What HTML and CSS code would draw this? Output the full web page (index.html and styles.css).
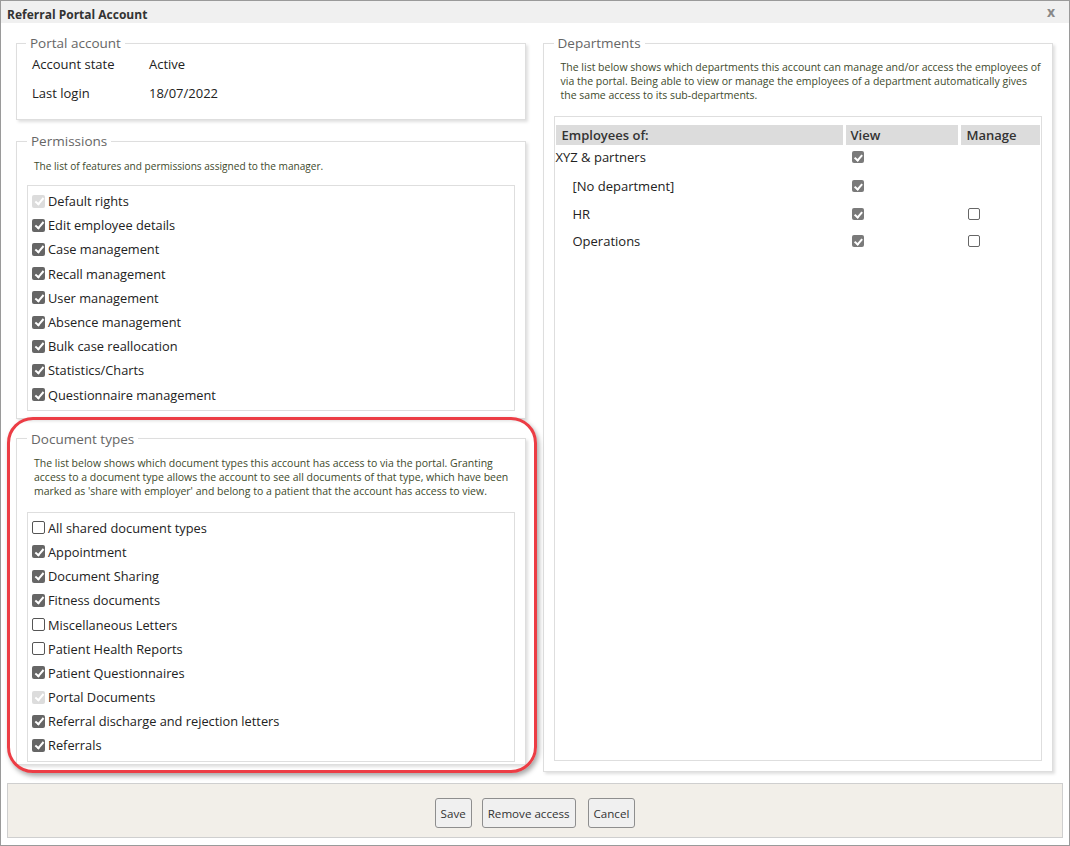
FILE: index.html
```html
<!DOCTYPE html>
<html>
<head>
<meta charset="utf-8">
<link rel="stylesheet" href="styles.css">
</head>
<body>
<div class="window">
  <div class="titlebar">
    <span class="title">Referral Portal Account</span>
    <span class="close">x</span>
  </div>
  <div class="content">
    <div class="col left">
      <fieldset class="fs fs-account">
        <legend>Portal account</legend>
        <div class="kv"><span class="k">Account state</span><span class="v">Active</span></div>
        <div class="kv"><span class="k">Last login</span><span class="v">18/07/2022</span></div>
      </fieldset>
      <fieldset class="fs fs-perm">
        <legend>Permissions</legend>
        <p class="desc">The list of features and permissions assigned to the manager.</p>
        <div class="list list-perm">
          <div class="item"><span class="cb dis"></span>Default rights</div>
          <div class="item"><span class="cb on"></span>Edit employee details</div>
          <div class="item"><span class="cb on"></span>Case management</div>
          <div class="item"><span class="cb on"></span>Recall management</div>
          <div class="item"><span class="cb on"></span>User management</div>
          <div class="item"><span class="cb on"></span>Absence management</div>
          <div class="item"><span class="cb on"></span>Bulk case reallocation</div>
          <div class="item"><span class="cb on"></span>Statistics/Charts</div>
          <div class="item"><span class="cb on"></span>Questionnaire management</div>
        </div>
      </fieldset>
      <fieldset class="fs fs-doc">
        <legend>Document types</legend>
        <p class="desc">The list below shows which document types this account has access to via the portal. Granting access to a document type allows the account to see all documents of that type, which have been marked as 'share with employer' and belong to a patient that the account has access to view.</p>
        <div class="list list-doc">
          <div class="item"><span class="cb off"></span>All shared document types</div>
          <div class="item"><span class="cb on"></span>Appointment</div>
          <div class="item"><span class="cb on"></span>Document Sharing</div>
          <div class="item"><span class="cb on"></span>Fitness documents</div>
          <div class="item"><span class="cb off"></span>Miscellaneous Letters</div>
          <div class="item"><span class="cb off"></span>Patient Health Reports</div>
          <div class="item"><span class="cb on"></span>Patient Questionnaires</div>
          <div class="item"><span class="cb dis"></span>Portal Documents</div>
          <div class="item"><span class="cb on"></span>Referral discharge and rejection letters</div>
          <div class="item"><span class="cb on"></span>Referrals</div>
        </div>
      </fieldset>
    </div>
    <div class="col right">
      <fieldset class="fs fs-dept">
        <legend>Departments</legend>
        <p class="desc">The list below shows which departments this account can manage and/or access the employees of via the portal. Being able to view or manage the employees of a department automatically gives the same access to its sub-departments.</p>
        <div class="list list-dept">
          <table class="dept">
            <thead>
              <tr><th class="c1">Employees of:</th><th class="c2">View</th><th class="c3">Manage</th></tr>
            </thead>
            <tbody>
              <tr class="r1"><td class="c1">XYZ &amp; partners</td><td class="c2"><span class="cb on sm"></span></td><td class="c3"></td></tr>
              <tr class="r2"><td class="c1 sub">[No department]</td><td class="c2"><span class="cb on sm"></span></td><td class="c3"></td></tr>
              <tr class="r3"><td class="c1 sub">HR</td><td class="c2"><span class="cb on sm"></span></td><td class="c3"><span class="cb off sm"></span></td></tr>
              <tr class="r4"><td class="c1 sub">Operations</td><td class="c2"><span class="cb on sm"></span></td><td class="c3"><span class="cb off sm"></span></td></tr>
            </tbody>
          </table>
        </div>
      </fieldset>
    </div>
  </div>
  <div class="footer">
    <button class="btn">Save</button>
    <button class="btn btn-mid">Remove access</button>
    <button class="btn">Cancel</button>
  </div>
  <div class="highlight"></div>
</div>
</body>
</html>
```
FILE: styles.css
```css
html, body {
  margin: 0;
  padding: 0;
  background: #fff;
}
body {
  font-family: "Open Sans", "Liberation Sans", sans-serif;
  color: #222;
}
.window {
  position: relative;
  width: 1070px;
  height: 846px;
  box-sizing: border-box;
  border: 1px solid #9a9a9a;
  background: #fff;
  display: flex;
  flex-direction: column;
  overflow: hidden;
}
.titlebar {
  height: 22px;
  box-sizing: border-box;
  background: #f0f0f0;
  display: flex;
  align-items: center;
  justify-content: space-between;
  padding: 4px 14px 0 6px;
  flex: none;
}
.title {
  font-weight: 700;
  font-size: 12px;
  color: #333;
}
.close {
  font-weight: 700;
  font-size: 14px;
  color: #888;
  line-height: 1;
  margin-top: -5px;
}
.content {
  flex: 1;
  display: flex;
  gap: 17px;
  padding: 11px 16px 0 15px;
  min-height: 0;
}
.col {
  display: flex;
  flex-direction: column;
}
.left { width: 510px; }
.right { width: 511px; }
.fs {
  margin: 0 0 11px 0;
  border: 1px solid #dedede;
  box-shadow: 2px 2px 3px rgba(0, 0, 0, 0.13);
  padding: 0 10px 7px 10px;
  min-width: 0;
}
.fs legend {
  font-size: 13.5px;
  line-height: 18px;
  color: #666;
  padding: 0 4px;
}
.fs-account {
  padding: 2px 10px 16px 15px;
  margin-bottom: 12px;
}
.fs-account legend { margin-left: -6px; }
.kv {
  display: flex;
  font-size: 13px;
  line-height: 20px;
  height: 20px;
  color: #222;
}
.kv + .kv { margin-top: 9px; }
.k { width: 117px; }
.desc {
  margin: 9px 0 12px 7px;
  font-size: 10.5px;
  line-height: 14px;
  color: #3e4a2c;
}
.fs-perm .desc { font-size: 10.1px; }
.fs-doc .desc { margin-top: 8px; margin-bottom: 14px; }
.list {
  border: 1px solid #dedede;
  padding: 3px 5px 3px 4px;
}
.list-perm { padding-top: 3px; }
.list-doc { flex: 1; padding-top: 3px; }
.fs-doc {
  flex: 1;
  display: flex;
  flex-direction: column;
  padding-bottom: 2px;
  margin-bottom: 19px;
}
.item {
  height: 24.2px;
  display: flex;
  align-items: center;
  font-size: 12.8px;
  color: #222;
}
.cb {
  display: inline-block;
  width: 13px;
  height: 13px;
  box-sizing: border-box;
  border-radius: 2px;
  position: relative;
  margin-right: 3px;
  flex: none;
}
.cb.on { background: #666; }
.cb.dis { background: #dcdcdc; }
.cb.off { background: #fff; border: 1px solid #555; }
.cb.on::after, .cb.dis::after {
  content: "";
  position: absolute;
  left: 4.5px;
  top: 1.5px;
  width: 3px;
  height: 7px;
  border: solid #fff;
  border-width: 0 2px 2px 0;
  transform: rotate(40deg);
}
.cb.sm.on { background: #7a7a7a; width: 12px; height: 12px; }
.cb.sm.off { width: 12px; height: 12px; border-color: #666; }
.cb.sm.on::after { left: 4px; top: 1.5px; width: 2.5px; height: 6px; }
.fs-dept {
  flex: 1;
  display: flex;
  flex-direction: column;
  padding-bottom: 10px;
}
.fs-dept .desc { margin-top: 8px; margin-bottom: 14px; }
.list-dept {
  flex: 1;
  padding: 8px 1px 0 1px;
}
.dept {
  border-collapse: separate;
  border-spacing: 3px 0;
  margin: 0 -3px;
  width: calc(100% + 6px);
  font-size: 13px;
}
.dept th {
  background: #dcdcdc;
  text-align: left;
  font-weight: 600;
  color: #333;
  height: 20px;
  padding: 0 0 0 6px;
  line-height: 20px;
}
.dept th.c1 { width: 281px; }
.dept th.c2 { width: 107px; padding-left: 5px; }
.dept td {
  padding: 0;
  height: 22px;
  color: #222;
  vertical-align: middle;
}
.dept td.c2 { padding-left: 6px; }
.dept td.c3 { padding-left: 7px; }
.dept td .cb { display: block; margin: 0; }
.r1 td { padding-top: 1px; }
.r2 td { padding-top: 7px; }
.r3 td { padding-top: 6px; }
.r4 td { padding-top: 5px; }
.dept td.sub { padding-left: 17px; }
.footer {
  flex: none;
  height: 55px;
  box-sizing: border-box;
  margin: 0 6px 7px 6px;
  background: #f2efe9;
  border: 1px solid #cfcfcf;
  display: flex;
  justify-content: center;
  align-items: center;
  gap: 10px;
  padding-top: 5px;
}
.btn {
  font-family: "Open Sans", "Liberation Sans", sans-serif;
  font-size: 11.6px;
  height: 30px;
  padding: 0 5px;
  border: 1px solid #8e8e8e;
  border-radius: 3px;
  background: #f0f0f0;
  color: #333;
}
.btn-mid { margin-right: 2px; }
.highlight {
  position: absolute;
  left: 6px;
  top: 416px;
  width: 524px;
  height: 350px;
  border: 3px solid #ec3d45;
  border-radius: 26px;
  box-shadow: 2px 3px 5px rgba(0, 0, 0, 0.35);
  pointer-events: none;
}
```
